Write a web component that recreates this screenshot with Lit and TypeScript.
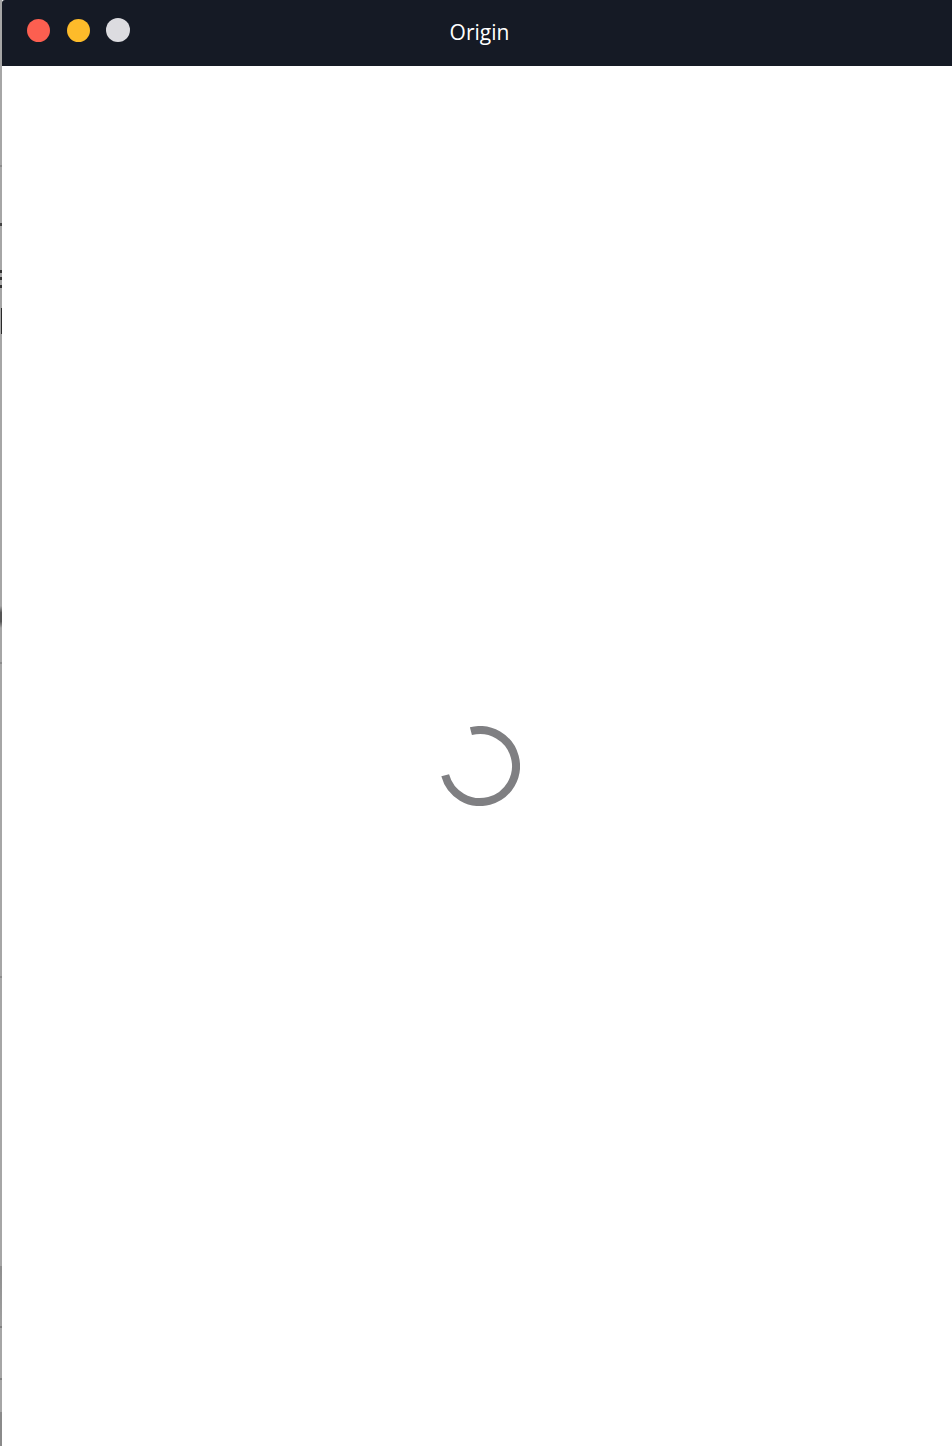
import { LitElement, html, css } from "lit";
import { customElement } from "lit/decorators.js";

@customElement("app-root")
export class AppRoot extends LitElement {
  static styles = css`
    :host {
      display: flex;
      width: 952px;
      height: 1446px;
      overflow: hidden;
      background: #fff;
      font-family: "Open Sans", sans-serif;
    }
    .edge {
      flex: 0 0 2px;
      background:
        linear-gradient(#444, #444) 0 223px / 2px 3px no-repeat,
        linear-gradient(#333, #333) 0 270px / 2px 3px no-repeat,
        linear-gradient(#333, #333) 0 277px / 2px 3px no-repeat,
        linear-gradient(#333, #333) 0 285px / 2px 3px no-repeat,
        linear-gradient(#2a2a2a, #2a2a2a) 1px 308px / 1px 26px no-repeat,
        linear-gradient(#a6a6a6, #555 30%, #555 70%, #a6a6a6) 0 606px / 2px 22px no-repeat,
        linear-gradient(#8c8c8c, #8c8c8c) 0 165px / 2px 2px no-repeat,
        linear-gradient(#8c8c8c, #8c8c8c) 0 662px / 2px 2px no-repeat,
        linear-gradient(#8c8c8c, #8c8c8c) 0 976px / 2px 2px no-repeat,
        linear-gradient(#808080, #808080) 0 1326px / 2px 2px no-repeat,
        linear-gradient(#808080, #808080) 0 1378px / 2px 2px no-repeat,
        linear-gradient(#8e8e8e, #a0a0a0) 0 1266px / 2px 60px no-repeat,
        linear-gradient(#8a8a8a, #8a8a8a) 0 1412px / 2px 34px no-repeat,
        #a6a6a6;
    }
    .window {
      flex: 0 0 955px;
      display: flex;
      flex-direction: column;
    }
    .titlebar {
      flex: 0 0 66px;
      display: grid;
      grid-template-columns: 1fr auto 1fr;
      align-items: center;
      background: #151a25;
      border-top-left-radius: 3px;
    }
    .lights {
      display: flex;
      align-items: center;
      gap: 17px;
      padding: 0 0 6px 24.5px;
    }
    .light {
      width: 23px;
      height: 23px;
      border-radius: 50%;
      filter: blur(0.6px);
    }
    .red { background: #fc5f50; }
    .yellow { background: #fdbb2a; }
    .grey { background: #dcdce0; width: 24px; height: 24px; margin-left: -0.5px; }
    .title {
      color: #fff;
      font-size: 21px;
      line-height: 30px;
      padding-bottom: 2px;
    }
    .body {
      flex: 1;
      display: flex;
      align-items: center;
      justify-content: center;
      padding-top: 20px;
    }
    .spinner {
      display: block;
      width: 80px;
      height: 80px;
    }
    .spinner path {
      fill: none;
      stroke: #7f7f82;
      stroke-width: 8;
    }
  `;

  render() {
    return html`
      <div class="edge"></div>
      <div class="window">
        <header class="titlebar">
          <div class="lights">
            <span class="light red"></span>
            <span class="light yellow"></span>
            <span class="light grey"></span>
          </div>
          <div class="title">Origin</div>
          <div></div>
        </header>
        <main class="body">
          <svg class="spinner" viewBox="0 0 80 80">
            <path d="M30.9 5.2 A36 36 0 1 1 5.2 49.3"></path>
          </svg>
        </main>
      </div>
    `;
  }
}
